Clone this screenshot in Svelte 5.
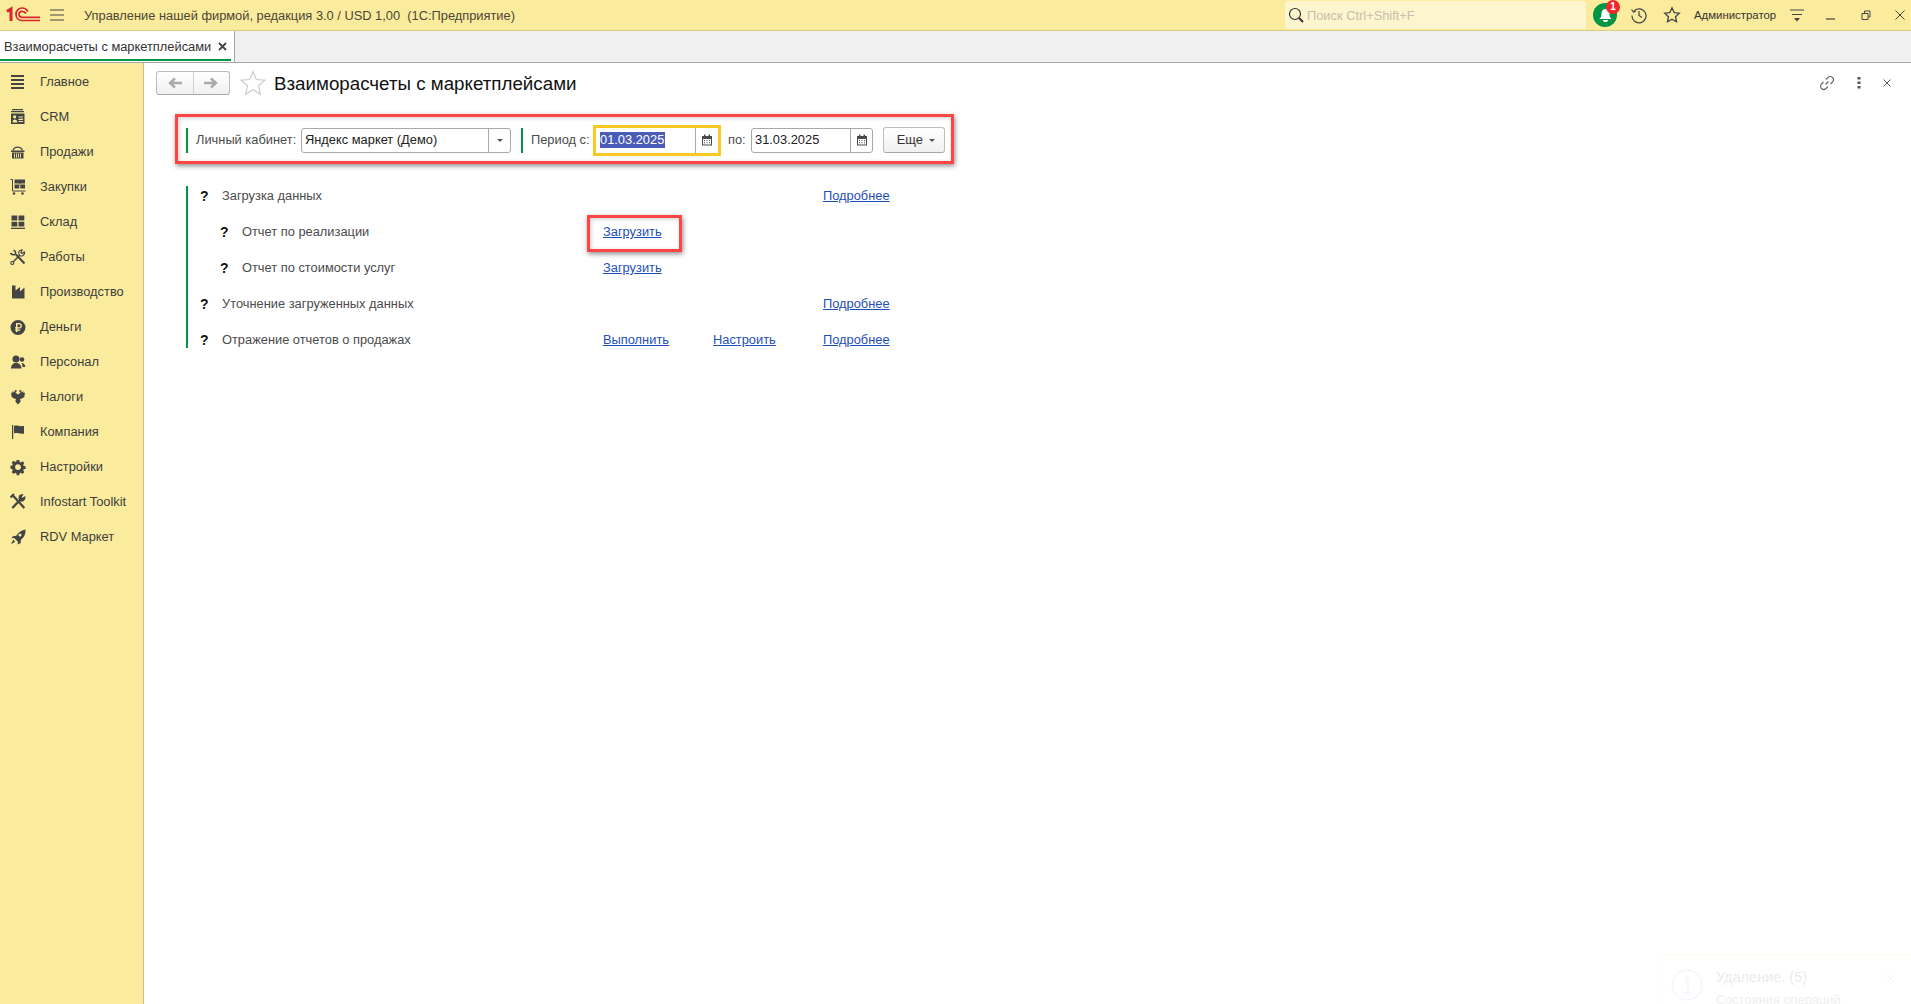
<script>
  const nav = ['Главное','CRM','Продажи','Закупки','Склад','Работы','Производство','Деньги','Персонал','Налоги','Компания','Настройки','Infostart Toolkit','RDV Маркет'];
  const rows = [
    { q: 'Загрузка данных', more: true },
    { q: 'Отчет по реализации', sub: true, a: 'Загрузить' },
    { q: 'Отчет по стоимости услуг', sub: true, a: 'Загрузить' },
    { q: 'Уточнение загруженных данных', more: true },
    { q: 'Отражение отчетов о продажах', a: 'Выполнить', b: 'Настроить', more: true }
  ];
</script>

{#snippet cal()}
  <svg class="cal" width="12" height="12" viewBox="0 0 12 12"><path d="M1 2h10v9.500H1z" fill="#4a4a4a"/><path d="M3 .5h1.400v2.500H3zM7.600.5H9v2.500H7.600z" fill="#4a4a4a"/><path d="M2 5h8v5.500H2z" fill="#fff"/><path d="M3 6h1v1H3zM5.500 6h1v1h-1zM8 6h1v1H8zM3 8.200h1v1H3zM5.500 8.200h1v1h-1zM8 8.200h1v1H8z" fill="#4a4a4a"/></svg>
{/snippet}

{#snippet icon(i)}
  <svg width="20" height="20" viewBox="0 0 20 20" fill="#444">
    {#if i === 0}
      <path d="M3 3h13v2H3zM3 7h13v2H3zM3 11h13v2H3zM3 15h13v2H3z"/>
    {:else if i === 1}
      <path d="M4 2h11v1.300H4zM3 4h13v1.300H3z"/><path fill-rule="evenodd" d="M3 6.500h13.500V17H3zM5 9.800a1.600 1.600 0 0 0 3.200 0 1.600 1.600 0 0 0-3.200 0zM4.500 15.500h4.700c0-1.900-1-2.900-2.300-2.900s-2.400 1-2.400 2.900zM10.500 9.500v1.100h4.500V9.500zM10.500 11.800v1.100h4.500v-1.100zM10.500 14v1.100h4.500V14z"/>
    {:else if i === 2}
      <path d="M3 8.500h13.500V10H3z"/><path d="M4 10.500h11.500V16.500H4z"/><path d="M6 11.500h.9v4.200H6zM8 11.500h.9v4.200H8zM10 11.500h.9v4.200H10zM12 11.500h.9v4.200H12z" fill="#fbec9d"/><path d="M5 8.500C6.500 4 13 4 14.500 8.500" fill="none" stroke="#444" stroke-width="1.100"/>
    {:else if i === 3}
      <path d="M6.500 2.500h10.500v4h-4.700v1h4.700v4h-4.700v-4h-1v4H6.500v-4h4.800v-1H6.500z"/><path d="M2.500 2.500h2v11.500h13" fill="none" stroke="#444" stroke-width="1"/><circle cx="6" cy="16.500" r="1.300"/><circle cx="14.500" cy="16.500" r="1.300"/>
    {:else if i === 4}
      <path d="M3.500 3.500h5.800v5H3.500zM10.500 3.500h5.800v5h-5.800zM3.500 9.700h5.800v4.800H3.500zM10.500 9.700h5.800v4.800h-5.800zM3 15.700h14v1.300H3z"/>
    {:else if i === 5}
      <g fill="none" stroke="#444">
        <path d="M8 7.500l8.500 9" stroke-width="2"/>
        <path d="M2.500 6c1 1.500 2.500 2.300 4.500 1.500C8.200 6 7.500 3.800 5.500 3.200" stroke-width="1.500"/>
        <path d="M11.500 8.500L5 15" stroke-width="1.500"/>
        <path d="M11.500 8.500c2.500 1.500 5.500-.5 5-3.500L14 6.500 12.800 5.500 14.300 3c-3-.5-4.500 2-2.800 5.500z" stroke-width="1.100"/>
        <circle cx="4.300" cy="16" r="1.500" stroke-width="1.200"/>
      </g>
    {:else if i === 6}
      <path d="M4 3.500h3.500v5L12 5v4.500l4.500-4V16.500H4z"/>
    {:else if i === 7}
      <path fill-rule="evenodd" d="M10 3a7.500 7.500 0 1 1 0 15 7.500 7.500 0 0 1 0-15zM8 6v4.300H7v1.300h1v.9H7v1.200h1V15h1.500v-1.300h2.700v-1.200H9.500v-.9h1.600a2.800 2.800 0 0 0 0-5.600zM9.500 7.300h1.600a1.500 1.500 0 0 1 0 3H9.500z"/>
    {:else if i === 8}
      <circle cx="8" cy="7" r="3.500"/><path d="M3 16.500c0-3.500 2-5.500 5-5.500s5.500 2 5.500 5.500z"/><circle cx="14" cy="7.500" r="2.300"/><path d="M13.500 11c2 0 3.800 1.300 3.800 4h-2.800c0-1.500-.4-2.800-1-4z"/>
    {:else if i === 9}
      <path d="M3 5.500l1.300.5L4.800 4l1.200 1.500L7 4l1 2 1.200 1L10 7.500l.8-.5L12 6l1-2 1 1.500L15.200 4l.5 2 1.300-.5-.7 4.500-2.300 1.500-2 .5 .7 2.500L10 17.500 7.300 14.500 8 12l-2-.5L3.700 10z"/><circle cx="7.700" cy="4" r="1.100"/><circle cx="12.300" cy="4" r="1.100"/>
    {:else if i === 10}
      <path d="M4 3h1.200v14H4z"/><path d="M6 4c2.500-1.300 4.500.7 10 0v7.500c-4.500.8-7.500-1.300-10 0z"/>
    {:else if i === 11}
      <path fill-rule="evenodd" d="M8.700 3h2.600l.3 1.900 1.300.5 1.600-1.100 1.800 1.800-1.100 1.600.5 1.300 1.900.3v2.600l-1.900.3-.5 1.300 1.100 1.600-1.800 1.800-1.600-1.100-1.300.5-.3 1.900H8.700l-.3-1.900-1.300-.5-1.600 1.100-1.800-1.800 1.100-1.600-.5-1.300L2.400 11.400V8.800l1.900-.3.5-1.300-1.100-1.600 1.800-1.800 1.600 1.100 1.300-.5zM10 7.200a2.900 2.900 0 1 0 0 5.800 2.900 2.900 0 0 0 0-5.800z"/>
    {:else if i === 12}
      <g fill="none" stroke="#444">
        <path d="M4 2.800L7 5.800 16.300 16" stroke-width="2.300"/>
        <path d="M2.500 5.500L6 2" stroke-width="2"/>
        <path d="M12 8L4.300 16" stroke-width="2.400"/>
        <path d="M11.800 8.500c2.500 1.500 5.500-.5 5-3.500L14.300 6.500 13 5.300 14.600 2.800c-3-.5-4.500 2-2.800 5.700z" stroke-width="1.200" fill="#444"/>
      </g>
    {:else}
      <path fill-rule="evenodd" d="M17.500 2.500c.3 4.500-1.300 7.800-4.500 10.200l-.5 3.500-2.800 1.300.2-2.700-3.700-3.700-2.700.2L4.800 9.300l3.500-.5C10.700 5 13.700 3 17.500 2.500zM12 6.500a1.500 1.500 0 1 0 0 3 1.500 1.500 0 0 0 0-3z"/><path d="M5.300 12.800l1.900 1.900-4.200 2.500z"/>
    {/if}
  </svg>
{/snippet}

<div class="app">
  <header class="top">
    <svg class="logo" width="36" height="20" viewBox="0 0 36 20" fill="none" stroke="#d8262c">
      <path d="M2 6.500L6 4v12" stroke-width="3"/>
      <path d="M23 6.500C21.500 4 19.500 3 17 3c-3.500 0-6 2.800-6 6.300s2.500 6.200 6 6.200h18" stroke-width="1.700"/>
      <path d="M21 8.500c-.8-1.300-2.200-2.200-4-2.200-1.700 0-3 1.200-3 3s1.300 3 3 3h18" stroke-width="1.700"/>
    </svg>
    <svg class="burger" width="16" height="12" viewBox="0 0 16 12"><path d="M1 1h14M1 6h14M1 11h14" stroke="#444" stroke-width="1"/></svg>
    <span class="apptitle">Управление нашей фирмой, редакция 3.0 / USD 1,00&nbsp; (1С:Предприятие)</span>
    <div class="search">
      <svg width="18" height="18" viewBox="0 0 18 18" fill="none" stroke="#333"><circle cx="8" cy="8" r="5.500" stroke-width="1.200"/><path d="M12 12l4 4" stroke-width="2"/></svg>
      <span>Поиск Ctrl+Shift+F</span>
    </div>
    <div class="bell">
      <svg width="17" height="17" viewBox="0 0 17 17" fill="#fff"><path d="M8.500 2c2.500 0 4 1.800 4 4.500 0 3 .8 4.200 2 5.500h-12c1.200-1.300 2-2.500 2-5.500C4.500 3.800 6 2 8.500 2zM6 13h5c0 1.500-1 2-2.500 2S6 14.500 6 13z"/></svg>
      <span class="badge">1</span>
    </div>
    <svg class="hist" width="18" height="18" viewBox="0 0 18 18" fill="none" stroke="#444" stroke-width="1.200"><path d="M3.500 5.500A7 7 0 1 1 2 9.500"/><path d="M1.500 3.500l2 2.500 2.500-1"/><path d="M9 5v4.500l3 2"/></svg>
    <svg class="fav" width="18" height="18" viewBox="0 0 18 18" fill="none" stroke="#444" stroke-width="1.300"><path d="M9 1.800l2.200 4.800 5.100.6-3.800 3.500 1 5.100L9 13.200l-4.500 2.600 1-5.100-3.800-3.500 5.100-.6z"/></svg>
    <span class="user">Администратор</span>
    <svg class="filt" width="16" height="16" viewBox="0 0 16 16"><path d="M1 3h14M3 7.500h10" stroke="#444"/><path d="M5 11h6l-3 3.500z" fill="#444"/></svg>
    <svg class="win min" width="14" height="14" viewBox="0 0 14 14"><path d="M2 11h9" stroke="#444" stroke-width="1.200"/></svg>
    <svg class="win rest" width="14" height="14" viewBox="0 0 14 14" fill="none" stroke="#444"><path d="M3 5.500h6v6H3zM5.500 5V3h5.500v6H9.500"/></svg>
    <svg class="win clo" width="14" height="14" viewBox="0 0 14 14" fill="none" stroke="#444"><path d="M2.500 2.500l9 9M11.500 2.500l-9 9"/></svg>
  </header>

  <div class="tabs">
    <div class="tab">
      <span>Взаиморасчеты с маркетплейсами</span>
      <svg width="9" height="9" viewBox="0 0 9 9"><path d="M1 1l7 7M8 1L1 8" stroke="#444" stroke-width="1.800"/></svg>
    </div>
  </div>

  <div class="body">
    <nav class="side">
      {#each nav as n, i}
        <div class="item">{@render icon(i)}<span>{n}</span></div>
      {/each}
    </nav>

    <main class="main">
      <div class="head">
        <div class="navbtns">
          <button aria-label="Назад"><svg width="16" height="12" viewBox="0 0 16 12"><path d="M15 6H4M8 1.500L3 6l5 4.500" fill="none" stroke="#aaa" stroke-width="2.400"/></svg></button>
          <button aria-label="Вперед"><svg width="16" height="12" viewBox="0 0 16 12"><path d="M1 6h11M8 1.500L13 6l-5 4.500" fill="none" stroke="#aaa" stroke-width="2.400"/></svg></button>
        </div>
        <svg class="star" width="26" height="26" viewBox="0 0 26 26" fill="none" stroke="#c8c8c8" stroke-width="1.100"><path d="M13 1.500l3.300 8 8.700.7-6.600 5.600 2.100 8.500L13 19.700l-7.500 4.600 2.100-8.500L1 10.200l8.700-.7z"/></svg>
        <h1>Взаиморасчеты с маркетплейсами</h1>
        <div class="tools">
          <svg width="18" height="18" viewBox="0 0 18 18" fill="none" stroke="#666" stroke-width="1.100"><path d="M7.500 10.500l3-3M8 5.500l2-2a3 3 0 0 1 4.500 4.500l-2 2M10 12.500l-2 2A3 3 0 0 1 3.500 10l2-2"/></svg>
          <svg width="4" height="12" viewBox="0 0 4 12" fill="#555"><path d="M.5 0h3v2.500h-3zM.5 4.500h3V7h-3zM.5 9h3v2.500h-3z"/></svg>
          <svg width="10" height="10" viewBox="0 0 10 10"><path d="M1.500 1.500l7 7M8.500 1.500l-7 7" stroke="#555"/></svg>
        </div>
      </div>

      <div class="filters">
        <i class="gbar"></i>
        <label class="lk">Личный кабинет:</label>
        <div class="field cab">
          <span class="val">Яндекс маркет (Демо)</span>
          <span class="drop"><b class="tri"></b></span>
        </div>
        <i class="gbar second"></i>
        <label class="per">Период с:</label>
        <div class="field d1">
          <span class="val"><span class="sel">01.03.2025</span></span>
          <span class="cbtn">{@render cal()}</span>
        </div>
        <label class="po">по:</label>
        <div class="field d2">
          <span class="val">31.03.2025</span>
          <span class="cbtn">{@render cal()}</span>
        </div>
        <button class="more">Еще <b class="tri"></b></button>
      </div>

      <div class="tasks">
        {#each rows as r}
          <div class="row" class:sub={r.sub}>
            <span class="q">?</span>
            <span class="lbl">{r.q}</span>
            <span class="c">{#if r.a}<a href="#a">{r.a}</a>{/if}</span>
            <span class="c">{#if r.b}<a href="#b">{r.b}</a>{/if}</span>
            <span class="c">{#if r.more}<a href="#m">Подробнее</a>{/if}</span>
          </div>
        {/each}
      </div>

      <div class="mark m1"></div>
      <div class="mark m2"></div>

      <aside class="toast">
        <svg width="32" height="32" viewBox="0 0 32 32" fill="none" stroke="#eef3fb" stroke-width="1"><circle cx="16" cy="16" r="15"/><circle cx="16" cy="9" r="1.500"/><path d="M12 13h5v11M11 24h10"/></svg>
        <div class="tt"><span class="t1">Удаление. (5)</span><span class="t2">Состояния операций</span></div>
        <svg class="tx" width="9" height="9" viewBox="0 0 9 9"><path d="M1 1l7 7M8 1L1 8" stroke="#f0f0f0"/></svg>
      </aside>
    </main>
  </div>
</div>

<style>
  :global(body) { margin: 0; background: #fff; overflow: hidden; }
  .app { width: 1911px; height: 1004px; display: flex; flex-direction: column; font: 12.85px "Liberation Sans", Arial, sans-serif; color: #333; overflow: hidden; }
  .top { height: 30px; background: #fbec9d; border-bottom: 1px solid #d9cb80; display: flex; align-items: center; flex: none; }
  .logo { margin-left: 5px; flex: none; }
  .burger { margin-left: 8px; flex: none; }
  .apptitle { margin-left: 19px; color: #4b4636; white-space: pre; }
  .search { margin-left: auto; width: 301px; height: 28px; background: #fdf5cd; border-radius: 3px; display: flex; align-items: center; color: #c4c0ae; box-sizing: border-box; padding-left: 2px; gap: 2px; }
  .bell { margin-left: 7px; width: 24px; height: 24px; border-radius: 50%; background: #009646; position: relative; display: flex; align-items: center; justify-content: center; }
  .badge { position: absolute; top: -3px; right: -3px; width: 14px; height: 14px; border-radius: 50%; background: #f0272d; color: #fff; font-size: 10px; font-weight: 700; text-align: center; line-height: 14px; }
  .hist { margin-left: 13px; }
  .fav { margin-left: 15px; }
  .user { margin-left: 13px; font-size: 11.4px; color: #333; width: 84px; white-space: nowrap; }
  .filt { margin-left: 11px; }
  .win.min { margin-left: 19px; }
  .win.rest { margin-left: 21px; }
  .win.clo { margin-left: 20px; margin-right: 4px; }

  .tabs { height: 31px; background: #f0f0f0; border-bottom: 1px solid #a5a5a5; flex: none; display: flex; }
  .tab { width: 235px; height: 31px; box-sizing: border-box; background: #fff; border-right: 1px solid #a5a5a5; display: flex; align-items: center; padding: 0 7px 0 4px; justify-content: space-between; position: relative; color: #333; white-space: nowrap; }
  .tab::after { content: ""; position: absolute; left: 0; right: 3px; bottom: 1px; height: 2px; background: #009646; }

  .body { flex: 1; display: flex; min-height: 0; }
  .side { width: 144px; flex: none; box-sizing: border-box; background: #fbec9d; border-right: 1px solid #c9bc85; padding-top: 1px; }
  .item { height: 35px; display: flex; align-items: center; padding-left: 8px; gap: 12px; color: #3c3c3c; white-space: nowrap; }
  .item svg { flex: none; }

  .main { flex: 1; position: relative; min-width: 0; padding: 7px 0 0 12px; }
  .head { display: flex; align-items: center; height: 26px; }
  .navbtns { display: flex; width: 74px; height: 24px; box-sizing: border-box; border: 1px solid #bcbcbc; border-bottom-color: #a8a8a8; border-radius: 3px; background: linear-gradient(#fff, #f0f0f0); flex: none; }
  .navbtns button { flex: 1; border: 0; background: none; padding: 0; display: flex; align-items: center; justify-content: center; }
  .navbtns button + button { border-left: 1px solid #d0d0d0; }
  .star { margin-left: 10px; flex: none; }
  h1 { margin: 0 0 0 8px; font-size: 18.75px; font-weight: 400; color: #111; line-height: 26px; white-space: nowrap; padding-top: 1px; }
  .tools { margin-left: auto; margin-right: 19px; display: flex; align-items: center; gap: 21px; }

  .filters { display: flex; align-items: center; height: 26px; margin: 31px 0 0 30px; position: relative; }
  .gbar { width: 2px; height: 25px; background: #009646; flex: none; }
  .gbar.second { margin-left: 10px; }
  .lk { margin-left: 8px; color: #4b4b4b; width: 105px; white-space: nowrap; padding-bottom: 1px; }
  .per { margin-left: 8px; color: #4b4b4b; width: 62px; white-space: nowrap; padding-bottom: 1px; }
  .po { margin-left: 7px; color: #4b4b4b; width: 23px; padding-bottom: 1px; }
  .field { height: 25px; box-sizing: border-box; border: 1px solid #a9a9a9; border-radius: 3px; display: flex; align-items: center; background: #fff; flex: none; color: #222; }
  .cab { width: 210px; }
  .val { flex: 1; padding: 0 0 1px 3px; white-space: nowrap; }
  .drop, .cbtn { width: 21px; height: 100%; border-left: 1px solid #a9a9a9; display: flex; align-items: center; justify-content: center; flex: none; }
  .tri { display: inline-block; width: 0; height: 0; border: 3px solid transparent; border-top: 3px solid #555; border-bottom: 0; vertical-align: middle; }
  .d1 { width: 128px; height: 31px; border: 3px solid #fbc91f; border-radius: 0; margin: 0; }
  .d1 .val { padding-left: 4px; }
  .d1 .cbtn { height: 25px; width: 22px; }
  .sel { background: #4a5cb8; color: #fff; display: inline-block; padding: 0 1px 0 0; line-height: 16px; }
  .d2 { width: 122px; }
  .more { margin-left: 10px; width: 62px; height: 26px; border: 1px solid #bdbdbd; border-bottom-color: #a5a5a5; border-radius: 3px; background: linear-gradient(#fff, #f0f0f0); font: 12.85px "Liberation Sans", Arial, sans-serif; color: #333; padding: 0 0 2px 4px; }
  .more .tri { margin-left: 3px; }

  .tasks { margin: 33px 0 0 30px; border-left: 2px solid #009646; display: flex; flex-direction: column; gap: 18px; width: 760px; }
  .row { display: grid; grid-template-columns: 22px 381px 110px 110px 110px; padding-left: 12px; line-height: 20px; height: 18px; color: #4b4b4b; white-space: nowrap; }
  .row.sub { grid-template-columns: 22px 361px 110px 110px 110px; padding-left: 32px; }
  .q { color: #111; font-weight: 700; font-size: 14px; }
  a { color: #1e4fb8; text-decoration: underline; }

  .mark { position: absolute; box-sizing: border-box; border: 3px solid #ff4444; box-shadow: 1px 2px 5px rgba(0,0,0,.45), inset 1px 1px 4px rgba(0,0,0,.2); pointer-events: none; }
  .m1 { left: 31px; top: 51px; width: 779px; height: 50px; }
  .m2 { left: 443px; top: 152px; width: 95px; height: 37px; }

  .toast { position: absolute; right: 0; bottom: 0; width: 253px; height: 50px; box-sizing: border-box; border: 1px solid #fffcee; border-right: 0; border-bottom: 0; display: flex; padding: 14px 0 0 12px; gap: 13px; overflow: hidden; background: #fff; }
  .tt { display: flex; flex-direction: column; gap: 7px; }
  .t1 { font-size: 14.5px; color: #ecebea; white-space: nowrap; }
  .t2 { color: #f0efee; white-space: nowrap; }
  .tx { position: absolute; right: 16px; top: 19px; }
</style>
